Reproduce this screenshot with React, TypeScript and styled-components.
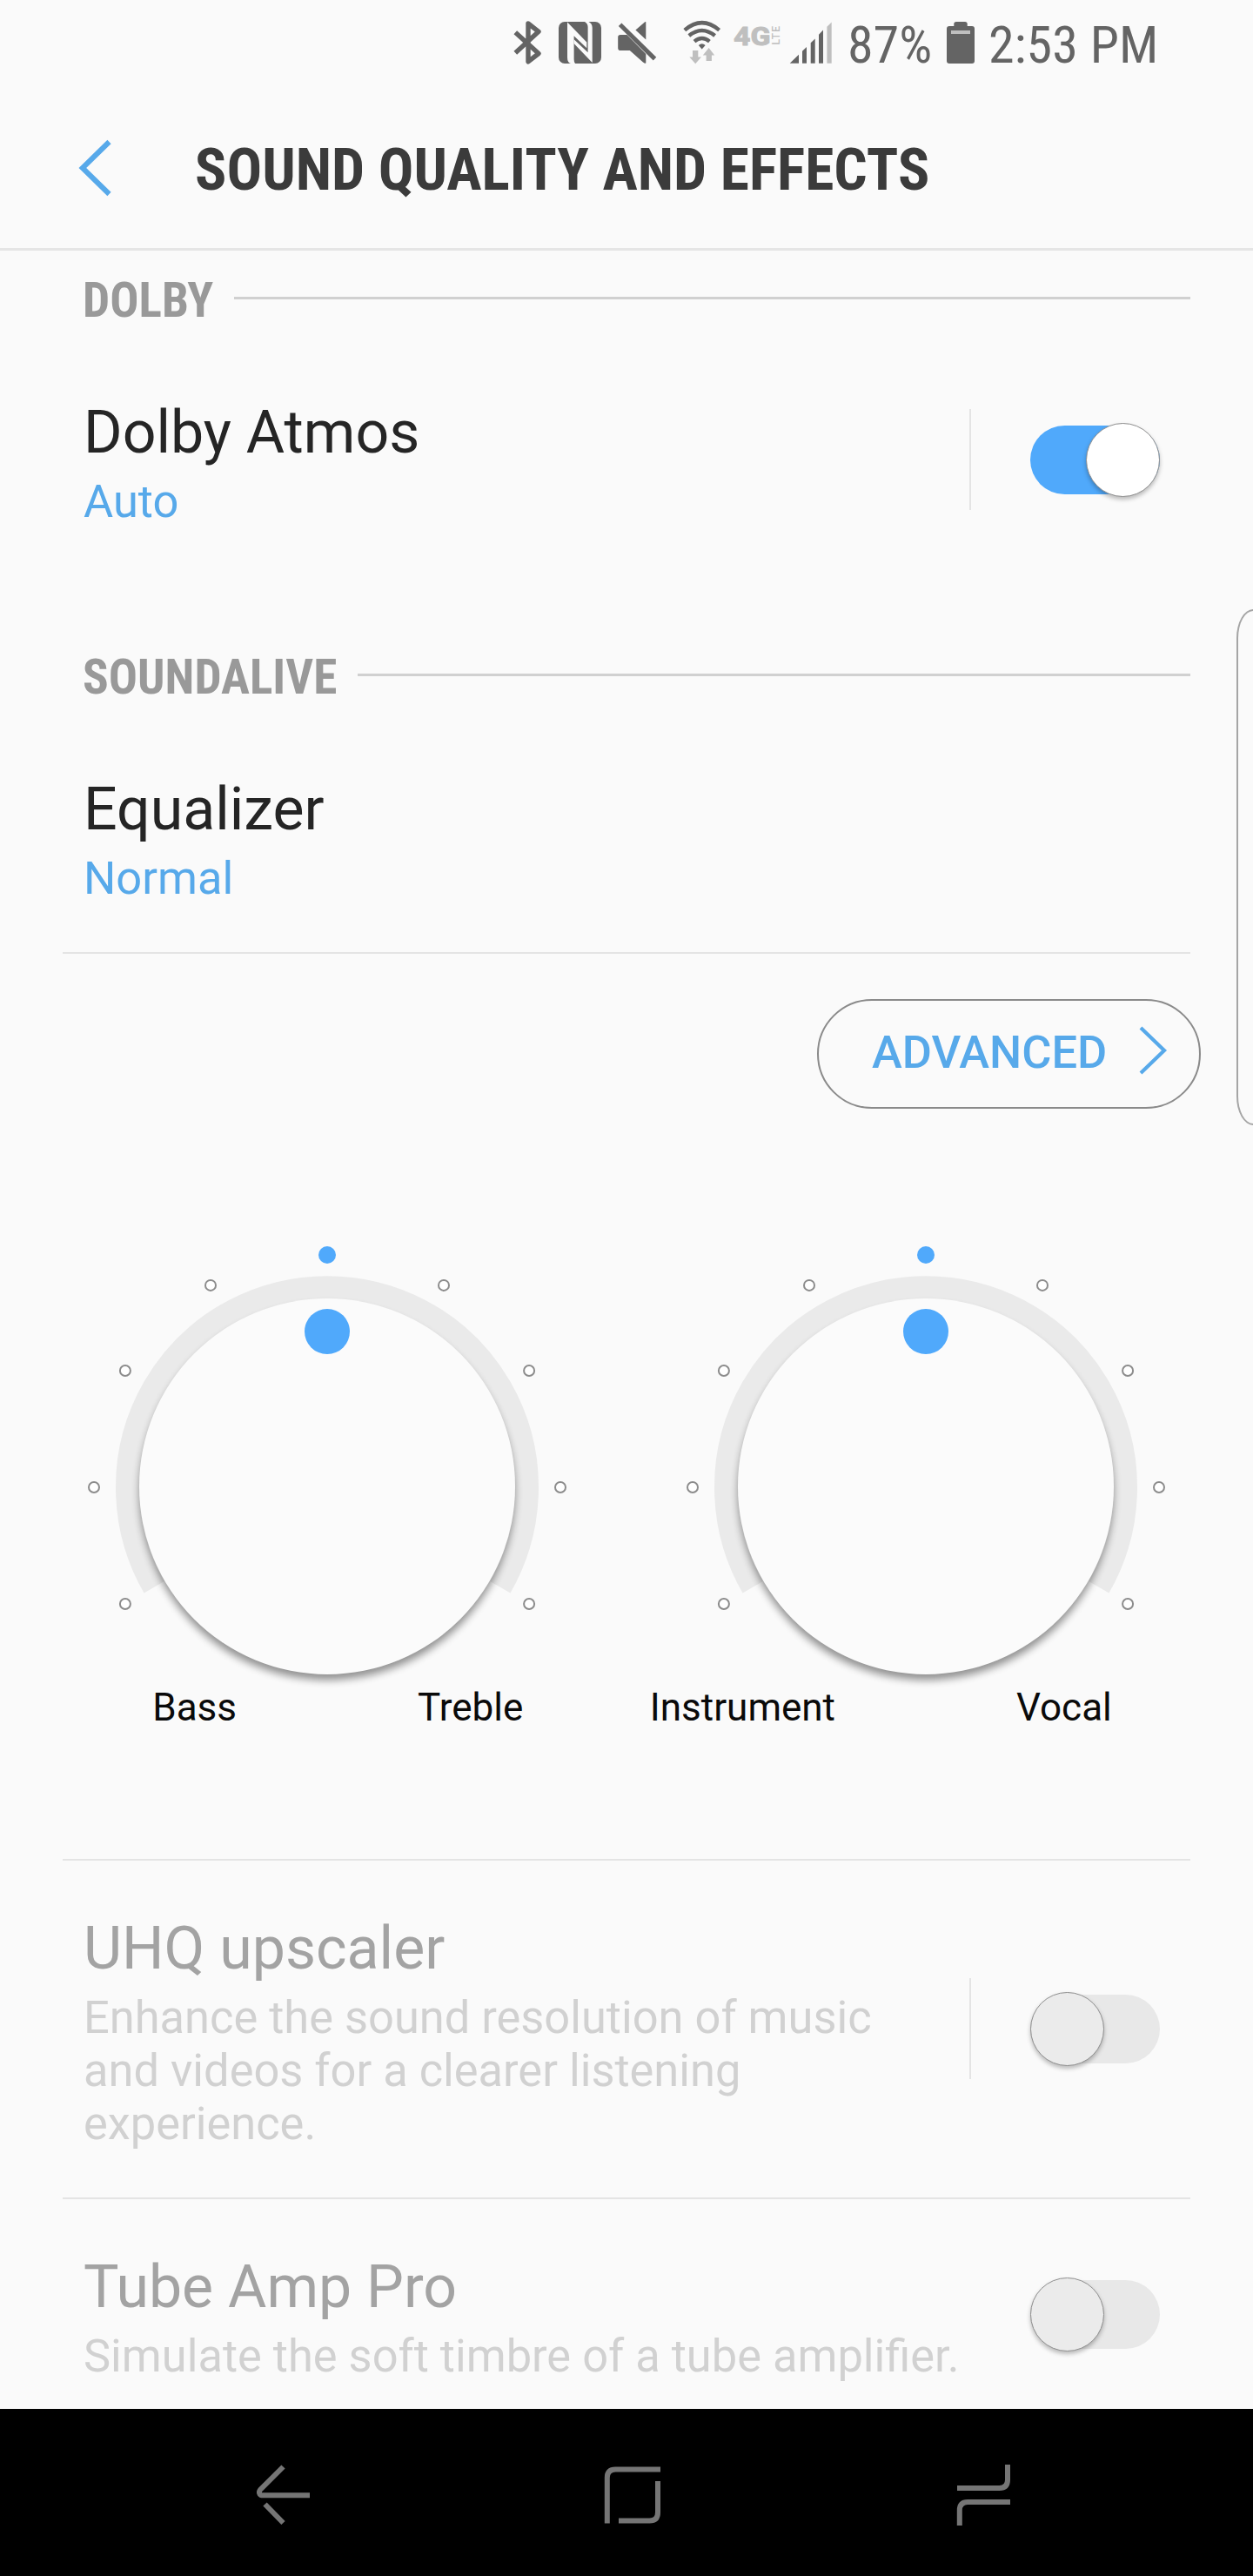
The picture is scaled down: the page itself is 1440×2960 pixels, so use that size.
import React from 'react';
import styled, { createGlobalStyle } from 'styled-components';

const BLUE = '#50a9fb';
const TEXT_BLUE = '#57a9ea';
const BG = '#fafafa';
const INK = '#646464';
const FAINT = '#bfbfbf';

const GlobalStyle = createGlobalStyle`
  *, *::before, *::after { box-sizing: border-box; }
  body {
    margin: 0;
    background: ${BG};
    font-family: Roboto, "Liberation Sans", sans-serif;
  }
`;

const Screen = styled.div`
  position: relative;
  display: flex;
  flex-direction: column;
  width: 1440px;
  height: 2960px;
  overflow: hidden;
  background: ${BG};
`;

/* ---------- status bar ---------- */

const StatusBar = styled.div`
  display: flex;
  align-items: center;
  height: 100px;
  padding-left: 586px;
`;

const StatusIcon = styled.svg`
  flex: none;
  height: 100px;
`;

const StatusText = styled.span<{ $width: number }>`
  flex: none;
  width: ${p => p.$width}px;
  padding-top: 3px;
  font-family: "Roboto Condensed", Roboto, sans-serif;
  font-size: 60px;
  line-height: 80px;
  white-space: nowrap;
  color: ${INK};
`;

const BluetoothIcon = () => (
  <StatusIcon width="46" viewBox="586 0 46 100">
    <path
      d="M592.3 37.3 L619 61.5 L607 70.8 V27 L619 36.3 L592.3 60.7"
      fill="none"
      stroke={INK}
      strokeWidth="5.4"
      strokeLinejoin="round"
    />
  </StatusIcon>
);

const NfcIcon = () => (
  <StatusIcon width="68" viewBox="632 0 68 100">
    <rect x="642" y="25" width="49" height="48" rx="7" fill={INK} />
    <path d="M652 25.5 L674.3 48.5 V55.2 L659.6 41.3 V68 Q659.6 71.5 661 73 H656 Q652 72 652 66 Z" fill={BG} />
    <path d="M672 25 H676.5 Q680.7 27 680.7 32 V72 L659.6 50 V45.2 L675.6 60.3 V31 Q675.6 27 672 25 Z" fill={BG} />
  </StatusIcon>
);

const MuteIcon = () => (
  <StatusIcon width="70" viewBox="700 0 70 100">
    <path d="M742.3 25.2 V45.5 L730.4 34.4 L740 26.2 Q741.6 24.8 742.3 25.2 Z" fill={INK} />
    <path d="M713 40 H720.5 L742.3 62 V72.6 Q741.2 73.2 739 71.4 L723.8 58 H713 Q710.2 58 710.2 55.2 V42.8 Q710.2 40 713 40 Z" fill={INK} />
    <path d="M712.6 28.3 L752.5 67.6" stroke={INK} strokeWidth="5" />
  </StatusIcon>
);

const WifiIcon = () => (
  <StatusIcon width="66" viewBox="770 0 66 100">
    <g fill="none" stroke={INK} strokeWidth="4.4">
      <path d="M786.8 34.6 Q806.7 17.6 826.6 34.6" />
      <path d="M791.8 41 Q806.7 28.8 821.6 41" />
      <path d="M798 47.6 Q806.7 40.6 815.4 47.6" />
    </g>
    <path d="M802.8 52 Q806.7 48.6 810.6 52 L806.7 56.6 Z" fill={INK} />
    <path d="M796 58 H802.3 V65.5 H806 L799.2 73.3 L792.3 65.5 H796 Z" fill={FAINT} />
    <path d="M811.6 70 H817.9 V63.5 H821.2 L814.6 55 L807.8 63.5 H811.6 Z" fill={FAINT} />
  </StatusIcon>
);

const NetworkIcon = () => (
  <StatusIcon width="66" viewBox="836 0 66 100">
    <g fill={FAINT} fontFamily="Roboto, sans-serif">
      <text
        x="843"
        y="51.5"
        fontSize="29"
        fontWeight="800"
        textLength="42.5"
        lengthAdjust="spacingAndGlyphs"
        stroke={FAINT}
        strokeWidth="0.8"
      >
        4G
      </text>
      <text transform="translate(896.2 51.5) rotate(-90)" fontSize="12" fontWeight="500" textLength="21.5">LTE</text>
    </g>
  </StatusIcon>
);

const SignalIcon = () => (
  <StatusIcon width="72" viewBox="902 0 72 100">
    <path
      d="M907.7 72.8 L918 62.8 V72.8 Z M922 72.8 V58.8 L927 54 V72.8 Z M931.7 72.8 V49.2 L936.7 44.4 V72.8 Z M941 72.8 V39.8 L946 34.6 V72.8 Z"
      fill={INK}
    />
    <path d="M950.4 72.8 V30.8 L955.7 25.6 V72.8 Z" fill={FAINT} />
  </StatusIcon>
);

const BatteryIcon = () => (
  <StatusIcon width="52" viewBox="1084 0 52 100">
    <rect x="1088" y="30" width="32" height="43" rx="3" fill={INK} />
    <path d="M1096.3 31 V27.5 Q1096.3 25 1099 25 H1109 Q1111.7 25 1111.7 27.5 V31 Z" fill={INK} />
    <rect x="1093" y="35" width="22" height="4" fill={FAINT} />
  </StatusIcon>
);

/* ---------- title bar ---------- */

const TitleBar = styled.header`
  display: flex;
  align-items: center;
  height: 188px;
  padding-left: 86px;
  border-bottom: 3px solid #e5e5e5;
`;

const BackChevron = styled.svg`
  flex: none;
  width: 138px;
  height: 80px;
`;

const PageTitle = styled.h1`
  margin: 0;
  padding-top: 5px;
  font-family: "Roboto Condensed", Roboto, sans-serif;
  font-size: 67.5px;
  font-weight: 700;
  line-height: 80px;
  color: #3b3b3b;
`;

/* ---------- settings list ---------- */

const Content = styled.main`
  flex: none;
  height: 2480px;
`;

const SectionHeader = styled.div`
  display: flex;
  align-items: center;
  gap: 24px;
  height: 109px;
  padding: 0 72px 0 95px;

  &::after {
    content: "";
    flex: 1;
    height: 3px;
    background: #d0d0d0;
  }
`;

const SectionLabel = styled.h2`
  margin: 0;
  padding-top: 5px;
  font-family: "Roboto Condensed", Roboto, sans-serif;
  font-size: 55.2px;
  font-weight: 700;
  line-height: 70px;
  color: #999;
`;

const Item = styled.div<{ $height: number; $top: number }>`
  display: flex;
  align-items: flex-start;
  height: ${p => p.$height}px;
  padding: ${p => p.$top}px 107px 0 96px;
`;

const ItemRow = styled.div`
  display: flex;
  align-items: center;
  width: 100%;
`;

const ItemText = styled.div`
  flex: 1;
  min-width: 0;
`;

const ItemTitle = styled.div<{ $disabled?: boolean }>`
  font-size: 68px;
  line-height: 80px;
  color: ${p => (p.$disabled ? '#a3a3a3' : '#252525')};
`;

const ItemValue = styled.div`
  margin-top: 9px;
  font-size: 52.4px;
  line-height: 61px;
  color: ${TEXT_BLUE};
`;

const ItemDescription = styled.div`
  margin: 9px 0 0;
  padding-right: 40px;
  font-size: 52.4px;
  line-height: 61px;
  color: #d1d1d1;
`;

const SwitchDivider = styled.div`
  width: 2px;
  height: 116px;
  margin: 0 68px 8px 0;
  background: #e4e4e4;
`;

const Track = styled.div<{ $on: boolean }>`
  display: flex;
  flex: none;
  align-items: center;
  justify-content: ${p => (p.$on ? 'flex-end' : 'flex-start')};
  width: 149px;
  height: 79px;
  margin-bottom: 7px;
  border-radius: 40px;
  background: ${p => (p.$on ? BLUE : '#e8e8e8')};
`;

const Thumb = styled.div<{ $on: boolean }>`
  flex: none;
  width: 85px;
  height: 85px;
  border: 1px solid #8f8f8f;
  border-radius: 50%;
  background: ${p => (p.$on ? '#fff' : '#ebebeb')};
  box-shadow: 0 3px 5px rgba(0, 0, 0, 0.26);
`;

const Rule = styled.div`
  height: 2px;
  margin: 0 72px;
  background: #e4e4e4;
`;

const Switch = ({ on }: { on: boolean }) => (
  <Track $on={on}>
    <Thumb $on={on} />
  </Track>
);

/* ---------- equalizer dials ---------- */

const EqualizerPanel = styled.section`
  display: flex;
  flex-direction: column;
  height: 1040px;
  padding-top: 52px;
`;

const AdvancedButton = styled.button`
  display: flex;
  align-self: flex-end;
  align-items: center;
  width: 441px;
  height: 126px;
  margin: 0 60px 0 0;
  padding: 0 0 4px 61px;
  border: 2px solid #8a8a8a;
  border-radius: 63px;
  background: none;
  font-family: Roboto, sans-serif;
  font-size: 52.4px;
  font-weight: 500;
  line-height: 62px;
  color: ${TEXT_BLUE};
`;

const AdvancedChevron = styled.svg`
  width: 40px;
  height: 60px;
  margin: 0 0 6px 32px;
`;

const Dials = styled.div`
  display: flex;
  padding: 150px 32px 0;
`;

const DialColumn = styled.div`
  width: 688px;
`;

const DialFace = styled.svg`
  display: block;
  width: 688px;
  height: 512px;
  overflow: visible;
`;

const DialLabels = styled.div`
  display: grid;
  grid-template-columns: 1fr 1fr;
  gap: 208px;
  font-size: 44px;
  line-height: 52px;
  color: #0a0a0a;

  & > :first-child { text-align: right; }
`;

const TICKS = [-120, -90, -60, -30, 30, 60, 90, 120];

const Dial = ({ id, low, high }: { id: string; low: string; high: string }) => (
  <DialColumn>
    <DialFace viewBox="-344 -285 688 512">
      <defs>
        <filter id={id} x="-20%" y="-20%" width="140%" height="140%">
          <feGaussianBlur stdDeviation="5" />
        </filter>
      </defs>
      <path d="M-198.8 114.8 A229.5 229.5 0 1 1 198.8 114.8" fill="none" stroke="#eaeaea" strokeWidth="27" />
      <circle cy="6" r="215.5" fill="#000" opacity="0.42" filter={`url(#${id})`} />
      <circle cy="-1" r="216" fill="#fbfbfb" />
      <circle cy="-179" r="26" fill={BLUE} />
      <circle cy="-267" r="10" fill={BLUE} />
      {TICKS.map(deg => {
        const a = (deg * Math.PI) / 180;
        return (
          <circle
            key={deg}
            cx={268 * Math.sin(a)}
            cy={-268 * Math.cos(a)}
            r="6"
            fill="#fff"
            stroke="#8c8c8c"
            strokeWidth="2"
          />
        );
      })}
    </DialFace>
    <DialLabels>
      <span>{low}</span>
      <span>{high}</span>
    </DialLabels>
  </DialColumn>
);

/* ---------- edge handle and navigation ---------- */

const EdgeHandle = styled.div`
  position: absolute;
  top: 700px;
  right: -20px;
  width: 39px;
  height: 593px;
  border: 2px solid #a5a5a5;
  border-radius: 20px / 34px;
  background: ${BG};
`;

const NavBar = styled.nav`
  display: flex;
  align-items: center;
  justify-content: space-between;
  height: 192px;
  padding: 0 268px 0 286px;
  background: #000;
`;

const NavIcon = styled.svg`
  width: 80px;
  height: 80px;
  fill: none;
  stroke: #757575;
  stroke-width: 6px;
`;

export default function App() {
  return (
    <>
      <GlobalStyle />
      <Screen>
        <StatusBar>
          <BluetoothIcon />
          <NfcIcon />
          <MuteIcon />
          <WifiIcon />
          <NetworkIcon />
          <SignalIcon />
          <StatusText $width={110}>87%</StatusText>
          <BatteryIcon />
          <StatusText $width={210}>2:53 PM</StatusText>
        </StatusBar>
        <TitleBar>
          <BackChevron viewBox="86 152 138 80">
            <path d="M125.5 162 L94.8 192 L125.5 222" fill="none" stroke={TEXT_BLUE} strokeWidth="6" />
          </BackChevron>
          <PageTitle>SOUND QUALITY AND EFFECTS</PageTitle>
        </TitleBar>

        <Content>
          <SectionHeader>
            <SectionLabel>DOLBY</SectionLabel>
          </SectionHeader>
          <Item $height={324} $top={60}>
            <ItemRow>
              <ItemText>
                <ItemTitle>Dolby Atmos</ItemTitle>
                <ItemValue>Auto</ItemValue>
              </ItemText>
              <SwitchDivider />
              <Switch on />
            </ItemRow>
          </Item>

          <SectionHeader>
            <SectionLabel>SOUNDALIVE</SectionLabel>
          </SectionHeader>
          <Item $height={264} $top={60}>
            <ItemText>
              <ItemTitle>Equalizer</ItemTitle>
              <ItemValue>Normal</ItemValue>
            </ItemText>
          </Item>
          <Rule />

          <EqualizerPanel>
            <AdvancedButton>
              ADVANCED
              <AdvancedChevron viewBox="0 0 40 60">
                <path d="M7 5 L34 31 L7 57" fill="none" stroke={TEXT_BLUE} strokeWidth="4.2" />
              </AdvancedChevron>
            </AdvancedButton>
            <Dials>
              <Dial id="tone-shadow" low="Bass" high="Treble" />
              <Dial id="voice-shadow" low="Instrument" high="Vocal" />
            </Dials>
          </EqualizerPanel>
          <Rule />

          <Item $height={387} $top={61}>
            <ItemRow>
              <ItemText>
                <ItemTitle $disabled>UHQ upscaler</ItemTitle>
                <ItemDescription>
                  Enhance the sound resolution of music and videos for a clearer listening experience.
                </ItemDescription>
              </ItemText>
              <SwitchDivider />
              <Switch on={false} />
            </ItemRow>
          </Item>
          <Rule />
          <Item $height={241} $top={61}>
            <ItemRow>
              <ItemText>
                <ItemTitle $disabled>Tube Amp Pro</ItemTitle>
                <ItemDescription>Simulate the soft timbre of a tube amplifier.</ItemDescription>
              </ItemText>
              <Switch on={false} />
            </ItemRow>
          </Item>
        </Content>

        <NavBar>
          <NavIcon viewBox="286 2824 80 80">
            <path d="M325.5 2834.5 L299 2861 Q297 2863.5 298.5 2865.8 Q299.5 2867.3 302 2867.3 H356" />
            <path d="M304.5 2877.5 L325.5 2899" />
          </NavIcon>
          <NavIcon viewBox="689 2824 80 80">
            <path d="M697.8 2899.5 V2847 Q697.8 2837.5 707.3 2837.5 H759" />
            <path d="M756 2851 V2887 Q756 2896.5 746.5 2896.5 H711" />
          </NavIcon>
          <NavIcon viewBox="1092 2824 80 80">
            <path d="M1158 2832 V2849.5 Q1158 2859 1148.5 2859 H1100" />
            <path d="M1161 2875 H1112 Q1102.8 2875 1102.8 2884.5 V2902" />
          </NavIcon>
        </NavBar>

        <EdgeHandle />
      </Screen>
    </>
  );
}
